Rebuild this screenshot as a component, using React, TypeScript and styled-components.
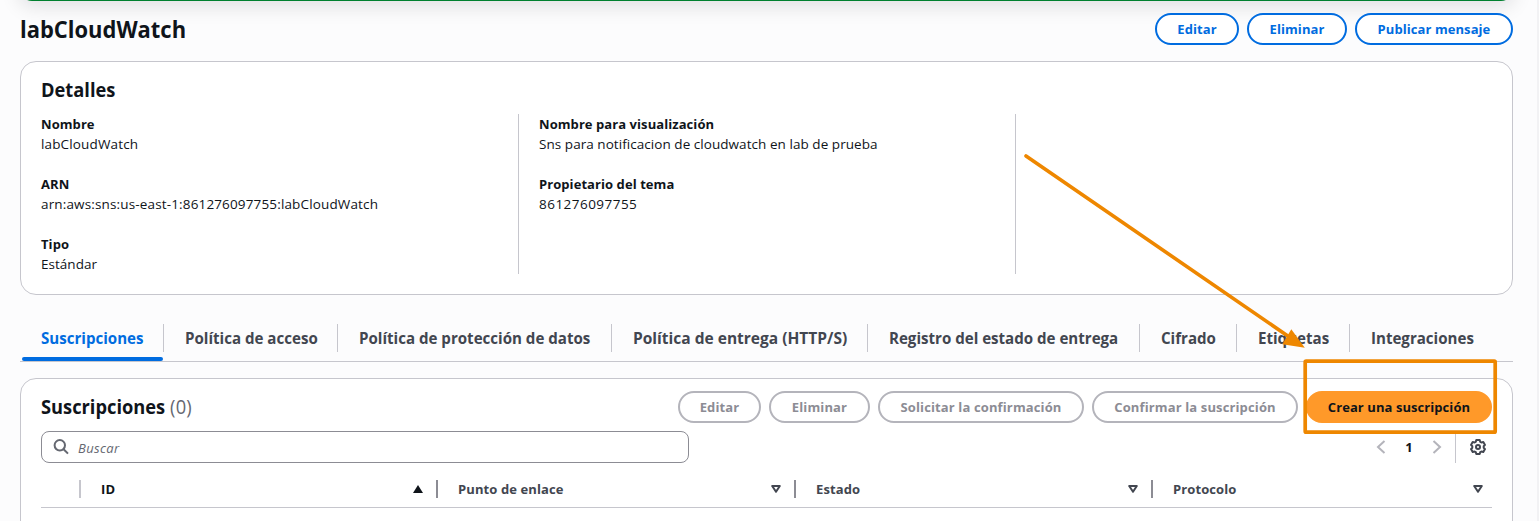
import React from "react";
import styled, { createGlobalStyle, css } from "styled-components";

const GlobalStyle = createGlobalStyle`
  *, *::before, *::after { box-sizing: border-box; }
  body {
    margin: 0;
    background: #fcfcfd;
    color: #0f141a;
    font: 400 13px/20px "Open Sans", "Noto Sans", sans-serif;
    overflow: hidden;
  }
  h1, h2 { margin: 0; }
`;

const Page = styled.main`
  position: relative;
  height: 521px;
  padding: 0 24px 0 20px;
  border-right: 2px solid #f2f2f4;
  overflow: hidden;
`;

const Flash = styled.div`
  height: 40px;
  margin-top: -39px;
  border-radius: 12px;
  background: #00802f;
  box-shadow: 0 4px 20px 1px rgba(0, 7, 22, 0.12);
`;

const PageHeader = styled.header`
  display: flex;
  align-items: center;
  justify-content: space-between;
  height: 32px;
  margin: 12px 0 16px;
`;

const narrow = css<{ $scale?: number }>`
  transform: scaleX(${(p) => p.$scale ?? 0.914});
  transform-origin: left center;
`;

const PageTitle = styled.h1`
  font-size: 24px;
  line-height: 30px;
  font-weight: 700;
  ${narrow}
`;

const Heading = styled.h2`
  font-size: 20px;
  line-height: 24px;
  font-weight: 700;
  ${narrow}
`;

const Counter = styled.span`
  color: #656871;
  font-weight: 400;
  letter-spacing: 0.3px;
`;

const Actions = styled.div`
  display: flex;
  gap: 8px;
`;

const buttonKinds = {
  normal: css`
    background: #fff;
    border-color: #006ce0;
    color: #006ce0;
  `,
  disabled: css`
    background: #fff;
    border-color: #b4b4bb;
    color: #8c8c94;
    letter-spacing: 0.13px;
  `,
  primary: css`
    background: #ff9929;
    border-color: #ff9929;
    color: #0f141a;
  `,
};

const Button = styled.button<{ $kind: keyof typeof buttonKinds; $width: number }>`
  width: ${(p) => p.$width}px;
  height: 32px;
  padding: 0;
  border: 2px solid;
  border-radius: 20px;
  font: 700 13px/20px "Open Sans", "Noto Sans", sans-serif;
  letter-spacing: 0.07px;
  white-space: nowrap;
  ${(p) => buttonKinds[p.$kind]}
`;

const Card = styled.section`
  border: 1px solid #c6c6cd;
  border-radius: 16px;
  background: #fff;
`;

const DetailsCard = styled(Card)`
  padding: 16px 20px 20px;
`;

const Columns = styled.div`
  display: grid;
  grid-template-columns: 477px 497px 1fr;
  height: 160px;
  margin-top: 12px;
`;

const Column = styled.dl`
  display: flex;
  flex-direction: column;
  gap: 20px;
  margin: 0;
  & + & {
    border-left: 1px solid #c6c6cd;
    padding-left: 20px;
  }
`;

const Term = styled.dt`
  font-weight: 700;
  letter-spacing: 0.07px;
`;

const Value = styled.dd<{ $spacing?: number }>`
  margin: 0;
  font-size: 13.5px;
  letter-spacing: ${(p) => p.$spacing ?? 0.15}px;
`;

const TabList = styled.nav`
  display: flex;
  height: 46px;
  margin-top: 21px;
  border-bottom: 1px solid #c6c6cd;
`;

const Tab = styled.div<{ $width: number; $active?: boolean }>`
  position: relative;
  width: ${(p) => p.$width}px;
  height: 28px;
  margin-top: 8px;
  padding-left: 21px;
  border-right: 1px solid #c6c6cd;
  color: ${(p) => (p.$active ? "#006ce0" : "#424650")};
  font-size: 16px;
  line-height: 28px;
  font-weight: 700;
  white-space: nowrap;
  &:last-child {
    border-right: 0;
  }
  ${(p) =>
    p.$active &&
    css`
      &::after {
        content: "";
        position: absolute;
        left: 2px;
        right: 0;
        bottom: -9px;
        height: 4px;
        border-radius: 2px;
        background: #006ce0;
      }
    `}
`;

const TabLabel = styled.span<{ $scale?: number }>`
  display: inline-block;
  ${narrow}
`;

const TableCard = styled(Card)`
  height: 200px;
  margin-top: 16px;
  padding: 12px 20px 0;
`;

const TableHeader = styled.div`
  display: flex;
  align-items: center;
  justify-content: space-between;
  height: 32px;
`;

const Tools = styled.div`
  display: flex;
  justify-content: space-between;
  height: 32px;
  margin-top: 8px;
`;

const Search = styled.div`
  display: flex;
  align-items: center;
  gap: 8px;
  width: 648px;
  padding: 0 10px;
  border: 1px solid #8c8c94;
  border-radius: 8px;
  color: #656871;
  font-style: italic;
  letter-spacing: 0.35px;
  span {
    padding-top: 2px;
  }
`;

const Pager = styled.div`
  display: flex;
  align-items: center;
  font-weight: 700;
  svg {
    display: block;
  }
`;

const PageNumber = styled.span`
  width: 40px;
  text-align: center;
`;

const Preferences = styled.div`
  display: flex;
  align-items: center;
  height: 32px;
  margin-left: 10px;
  padding: 0 6px 0 14px;
  border-left: 1px solid #c6c6cd;
`;

const HeadRow = styled.div`
  display: grid;
  grid-template-columns: 40px 357px 358px 357px 1fr;
  align-items: center;
  height: 45px;
  padding-top: 8px;
  border-bottom: 1px solid #c6c6cd;
`;

const HeadCell = styled.div<{ $sorted?: boolean; $tone?: string }>`
  display: flex;
  align-items: center;
  justify-content: space-between;
  height: 18px;
  padding: 0 13px 0 20px;
  border-right: 2px solid ${(p) => p.$tone ?? "#8c8c94"};
  color: ${(p) => (p.$sorted ? "#0f141a" : "#424650")};
  font-weight: 700;
  letter-spacing: 0.1px;
  &:last-child {
    border-right: 0;
    padding-right: 9px;
  }
`;

const Annotation = styled.svg`
  position: absolute;
  left: 0;
  top: 0;
  pointer-events: none;
`;

const SearchIcon = () => (
  <svg width="18" height="18" viewBox="0 0 18 18" fill="none" stroke="#656871" strokeWidth="2">
    <circle cx="7.8" cy="7.3" r="5.2" />
    <path d="M11.6 11.2l4.4 4.4" />
  </svg>
);

const Chevron = ({ next }: { next?: boolean }) => (
  <svg width="16" height="16" viewBox="0 0 16 16" fill="none" stroke="#b4b4bb" strokeWidth="2">
    <path d={next ? "M4.5 2l6.5 6-6.5 6" : "M11.5 2L5 8l6.5 6"} />
  </svg>
);

const GearIcon = () => (
  <svg width="16" height="16" viewBox="0 0 16 16" fill="none" stroke="#424650" strokeWidth="2" strokeLinejoin="round">
    <path d="M6.3 1h3.4l.5 1.8 1.2.7 1.9-.5 1.7 2.9L13.7 7.3v1.4L15 10.1 13.3 13l-1.9-.5-1.2.7L9.7 15H6.3l-.5-1.8-1.2-.7-1.9.5L1 10.1l1.3-1.4V7.3L1 5.9 2.7 3l1.9.5 1.2-.7z" />
    <circle cx="8" cy="8" r="2" />
  </svg>
);

const SortIcon = ({ ascending }: { ascending?: boolean }) => (
  <svg width="10" height="8" viewBox="0 0 10 8">
    {ascending ? (
      <path d="M5 0l5 8H0z" fill="#0f141a" />
    ) : (
      <path d="M1.2 1h7.6L5 6.8z" fill="none" stroke="#424650" strokeWidth="2" strokeLinejoin="round" />
    )}
  </svg>
);

const Field = ({ term, value, spacing }: { term: string; value: string; spacing?: number }) => (
  <div>
    <Term>{term}</Term>
    <Value $spacing={spacing}>{value}</Value>
  </div>
);

const tabs: { label: string; width: number; scale?: number }[] = [
  { label: "Suscripciones", width: 144 },
  { label: "Política de acceso", width: 174 },
  { label: "Política de protección de datos", width: 274 },
  { label: "Política de entrega (HTTP/S)", width: 256, scale: 0.97 },
  { label: "Registro del estado de entrega", width: 272 },
  { label: "Cifrado", width: 97 },
  { label: "Etiquetas", width: 113 },
  { label: "Integraciones", width: 140 },
];

const columns = ["ID", "Punto de enlace", "Estado", "Protocolo"];

export default function App() {
  return (
    <>
      <GlobalStyle />
      <Page>
        <Flash />
        <PageHeader>
          <PageTitle>labCloudWatch</PageTitle>
          <Actions>
            <Button $kind="normal" $width={84}>Editar</Button>
            <Button $kind="normal" $width={100}>Eliminar</Button>
            <Button $kind="normal" $width={158}>Publicar mensaje</Button>
          </Actions>
        </PageHeader>

        <DetailsCard>
          <Heading>Detalles</Heading>
          <Columns>
            <Column>
              <Field term="Nombre" value="labCloudWatch" />
              <Field term="ARN" value="arn:aws:sns:us-east-1:861276097755:labCloudWatch" />
              <Field term="Tipo" value="Estándar" spacing={0.02} />
            </Column>
            <Column>
              <Field
                term="Nombre para visualización"
                value="Sns para notificacion de cloudwatch en lab de prueba"
                spacing={0.05}
              />
              <Field term="Propietario del tema" value="861276097755" spacing={0.47} />
            </Column>
            <Column />
          </Columns>
        </DetailsCard>

        <TabList>
          {tabs.map(({ label, width, scale }, i) => (
            <Tab key={label} $width={width} $active={i === 0}>
              <TabLabel $scale={scale ?? 0.943}>{label}</TabLabel>
            </Tab>
          ))}
        </TabList>

        <TableCard>
          <TableHeader>
            <Heading>Suscripciones <Counter>(0)</Counter></Heading>
            <Actions>
              <Button $kind="disabled" $width={83}>Editar</Button>
              <Button $kind="disabled" $width={101}>Eliminar</Button>
              <Button $kind="disabled" $width={206}>Solicitar la confirmación</Button>
              <Button $kind="disabled" $width={206}>Confirmar la suscripción</Button>
              <Button $kind="primary" $width={186}>Crear una suscripción</Button>
            </Actions>
          </TableHeader>
          <Tools>
            <Search><SearchIcon /><span>Buscar</span></Search>
            <Pager>
              <Chevron />
              <PageNumber>1</PageNumber>
              <Chevron next />
              <Preferences><GearIcon /></Preferences>
            </Pager>
          </Tools>
          <HeadRow>
            <HeadCell $tone="#c6c6cd" />
            {columns.map((name, i) => (
              <HeadCell key={name} $sorted={i === 0}>
                {name}
                <SortIcon ascending={i === 0} />
              </HeadCell>
            ))}
          </HeadRow>
        </TableCard>

        <Annotation width="1537" height="521" viewBox="0 0 1537 521">
          <path d="M1026 156L1290 337.5" stroke="#ee8700" strokeWidth="3.6" strokeLinecap="round" />
          <path d="M1291.3 329.3l13.5 18.5-22.5-3.5z" fill="#ee8700" />
          <rect x="1305.2" y="361.2" width="190" height="71" rx="1" fill="none" stroke="#ee8700" strokeWidth="3.7" />
        </Annotation>
      </Page>
    </>
  );
}
